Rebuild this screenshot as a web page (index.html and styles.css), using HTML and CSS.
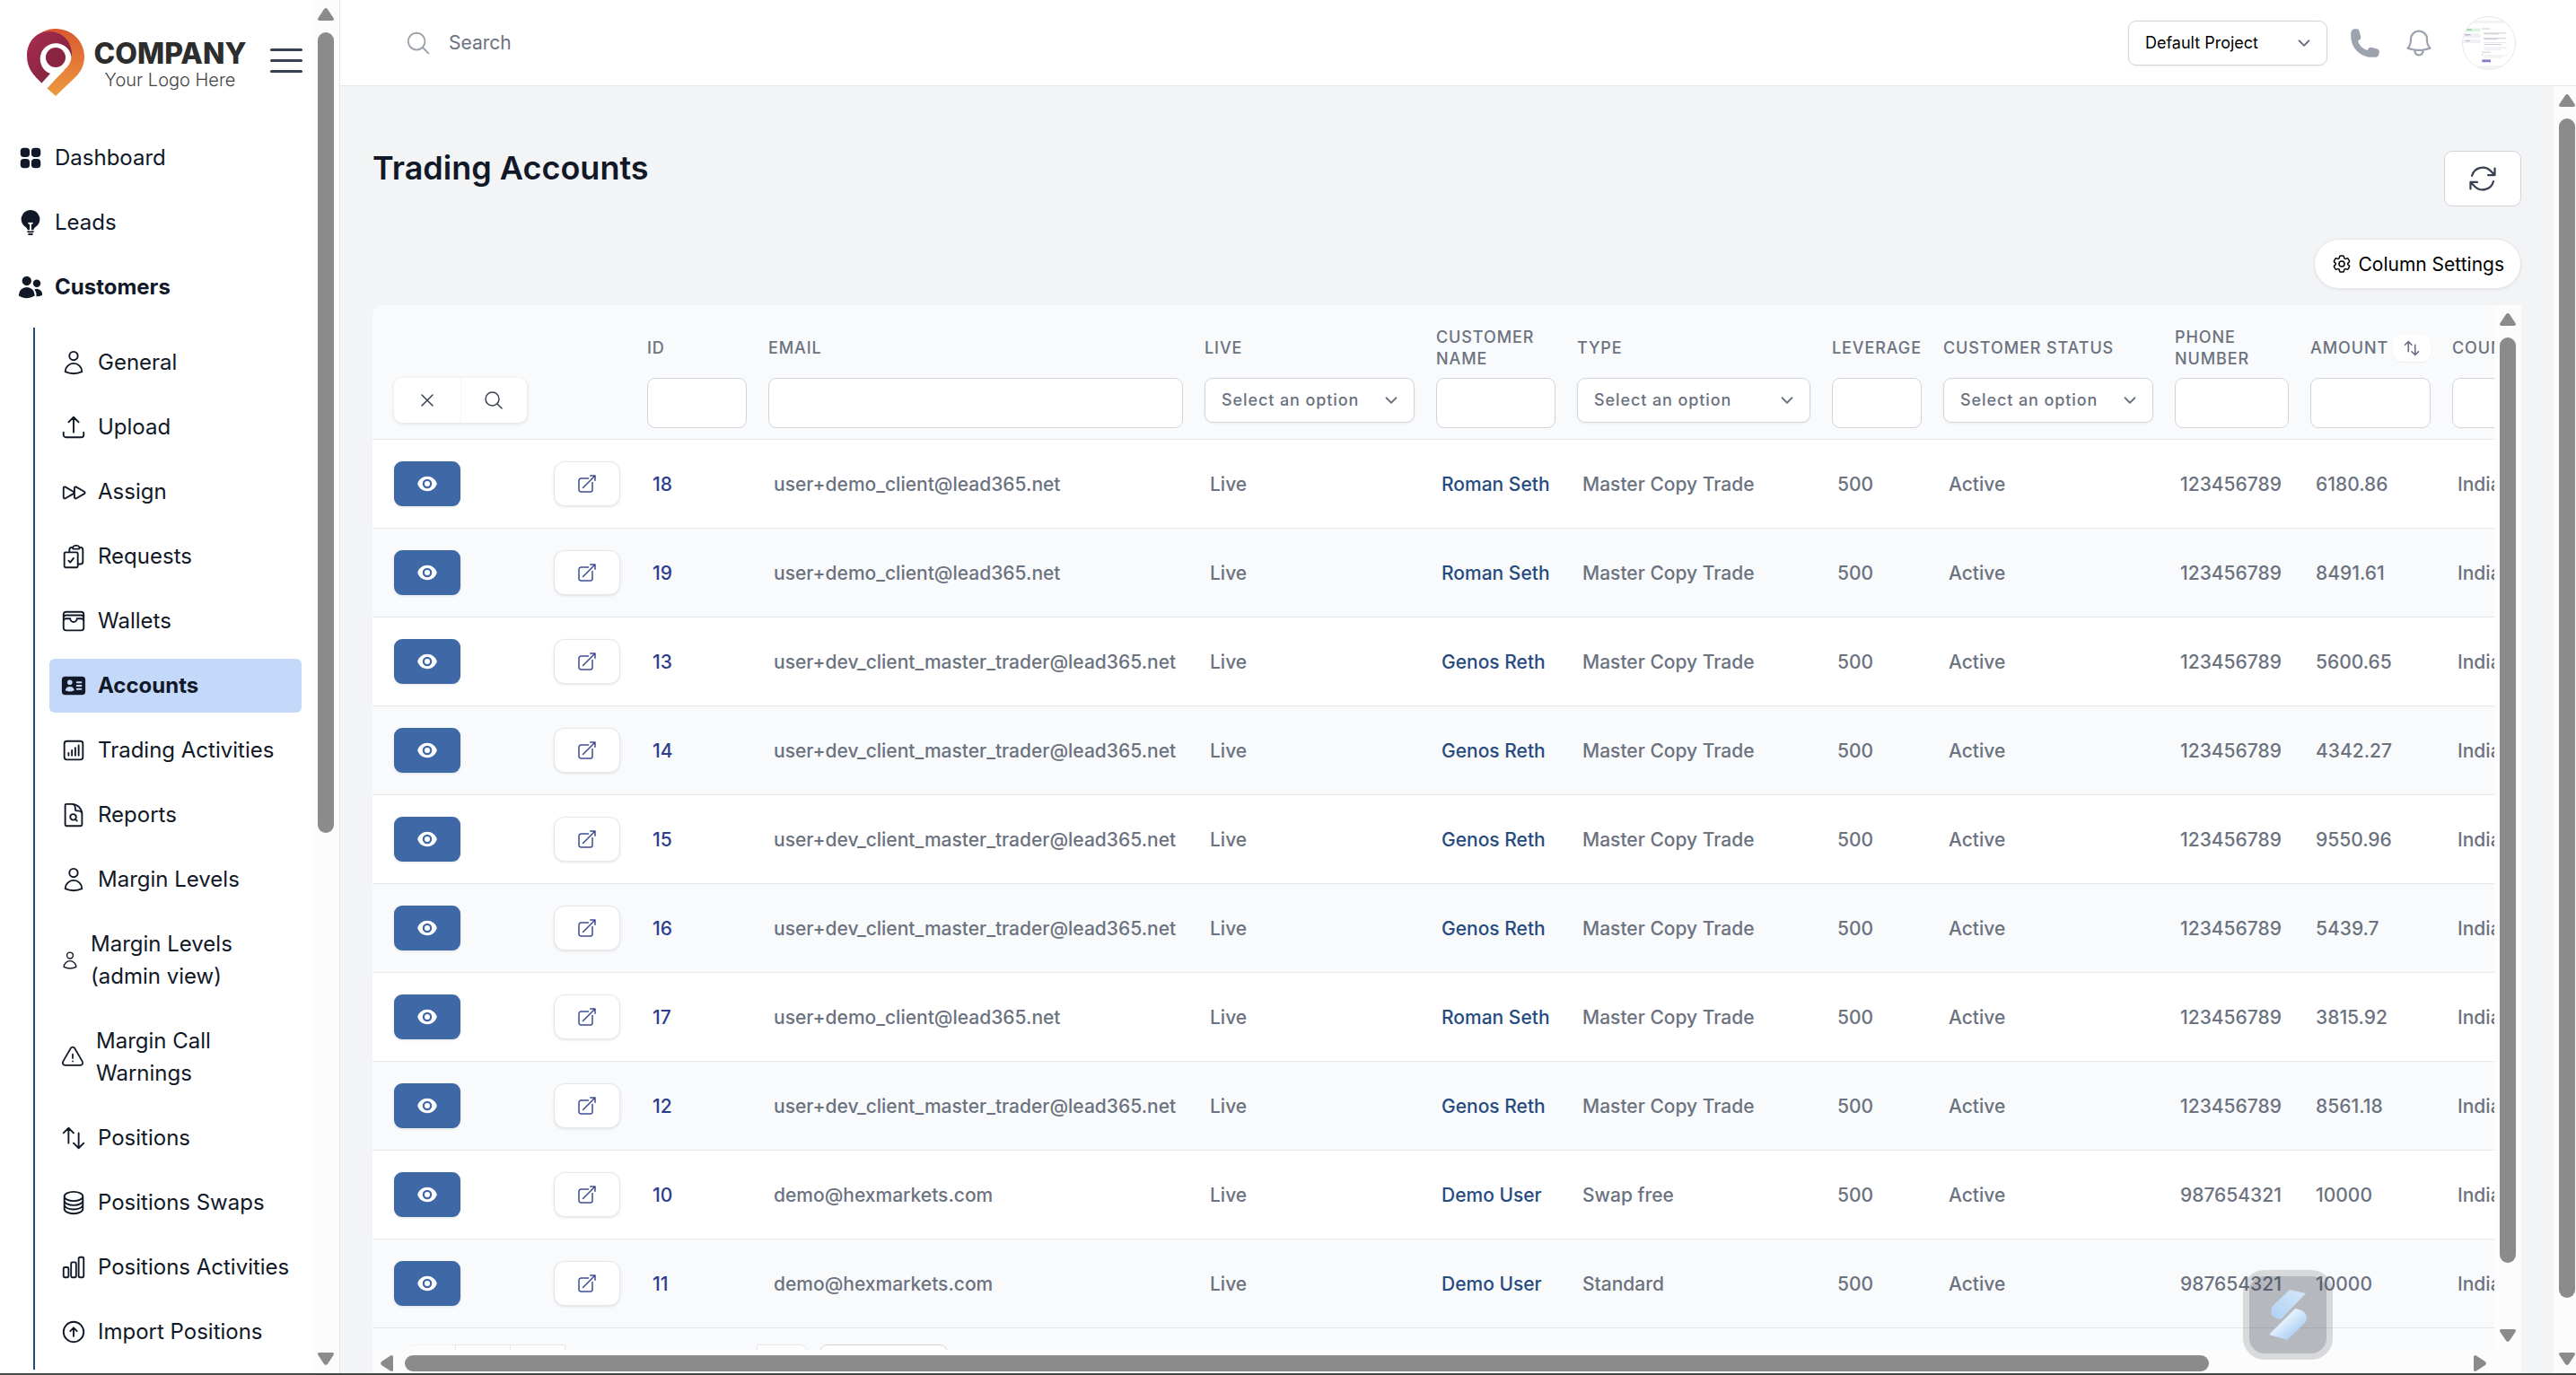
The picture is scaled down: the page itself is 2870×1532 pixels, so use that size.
FILE: index.html
```html
<!DOCTYPE html>
<html lang="en">
<head>
    <meta charset="UTF-8">
    <meta name="viewport" content="width=device-width, initial-scale=1.0">
    <title>Trading Accounts</title>
    <link rel="stylesheet" href="styles.css">
</head>
<body>
<!-- Icon sprite -->
<svg class="sprite" aria-hidden="true">
    <symbol id="i-grid" viewBox="0 0 24 24"><g fill="currentColor" stroke="none"><rect x="3" y="3" width="8.25" height="8.25" rx="3"/><rect x="12.75" y="3" width="8.25" height="8.25" rx="3"/><rect x="3" y="12.75" width="8.25" height="8.25" rx="3"/><rect x="12.75" y="12.75" width="8.25" height="8.25" rx="3"/></g></symbol>
    <symbol id="i-bulb" viewBox="0 0 24 24"><g fill="currentColor" stroke="none"><path d="M12 .75a8.25 8.25 0 0 0-4.135 15.39c.686.398 1.115 1.008 1.134 1.623a.75.75 0 0 0 .577.706c.352.083.71.148 1.074.195.323.041.6-.218.6-.544v-4.661a6.714 6.714 0 0 1-.937-.171.75.75 0 1 1 .374-1.453 5.261 5.261 0 0 0 2.626 0 .75.75 0 1 1 .374 1.452 6.712 6.712 0 0 1-.937.172v4.66c0 .327.277.586.6.545.364-.047.722-.112 1.074-.195a.75.75 0 0 0 .577-.706c.02-.615.448-1.225 1.134-1.623A8.25 8.25 0 0 0 12 .75Z"/><path d="M9.013 19.9a.75.75 0 0 1 .877-.597 11.319 11.319 0 0 0 4.22 0 .75.75 0 1 1 .28 1.473 12.819 12.819 0 0 1-4.78 0 .75.75 0 0 1-.597-.876ZM9.754 22.344a.75.75 0 0 1 .824-.668 13.682 13.682 0 0 0 2.844 0 .75.75 0 1 1 .156 1.492 15.156 15.156 0 0 1-3.156 0 .75.75 0 0 1-.668-.824Z"/></g></symbol>
    <symbol id="i-users" viewBox="0 0 24 24"><path fill="currentColor" stroke="none" d="M4.5 6.375a4.125 4.125 0 1 1 8.25 0 4.125 4.125 0 0 1-8.25 0ZM14.25 8.625a3.375 3.375 0 1 1 6.75 0 3.375 3.375 0 0 1-6.75 0ZM1.5 19.125a7.125 7.125 0 0 1 14.25 0v.003l-.001.119a.75.75 0 0 1-.363.63 13.067 13.067 0 0 1-6.761 1.873c-2.472 0-4.786-.684-6.76-1.873a.75.75 0 0 1-.364-.63l-.001-.122ZM17.25 19.128l-.001.144a2.25 2.25 0 0 1-.233.96 10.088 10.088 0 0 0 5.06-1.01.75.75 0 0 0 .42-.643 4.875 4.875 0 0 0-6.957-4.611 8.586 8.586 0 0 1 1.71 5.157v.003Z"/></symbol>
    <symbol id="i-user" viewBox="0 0 24 24"><path d="M15.75 6a3.75 3.75 0 1 1-7.5 0 3.75 3.75 0 0 1 7.5 0ZM4.501 20.118a7.5 7.5 0 0 1 14.998 0A17.933 17.933 0 0 1 12 21.75c-2.676 0-5.216-.584-7.499-1.632Z"/></symbol>
    <symbol id="i-upload" viewBox="0 0 24 24"><path d="M3 16.5v2.25A2.25 2.25 0 0 0 5.25 21h13.5A2.25 2.25 0 0 0 21 18.75V16.5m-13.5-9L12 3m0 0 4.5 4.5M12 3v13.5"/></symbol>
    <symbol id="i-forward" viewBox="0 0 24 24"><path d="M3 8.689c0-.864.933-1.406 1.683-.977l7.108 4.061a1.125 1.125 0 0 1 0 1.954l-7.108 4.061A1.125 1.125 0 0 1 3 16.811V8.69ZM12.75 8.689c0-.864.933-1.406 1.683-.977l7.108 4.061a1.125 1.125 0 0 1 0 1.954l-7.108 4.061a1.125 1.125 0 0 1-1.683-.977V8.69Z"/></symbol>
    <symbol id="i-clipboard" viewBox="0 0 24 24"><path d="M11.35 3.836c-.065.21-.1.433-.1.664 0 .414.336.75.75.75h4.5a.75.75 0 0 0 .75-.75 2.25 2.25 0 0 0-.1-.664m-5.8 0A2.251 2.251 0 0 1 13.5 2.25H15c1.012 0 1.867.668 2.15 1.586m-5.8 0c-.376.023-.75.05-1.124.08C9.095 4.01 8.25 4.973 8.25 6.108V8.25m8.9-4.414c.376.023.75.05 1.124.08 1.131.094 1.976 1.057 1.976 2.192V16.5A2.25 2.25 0 0 1 18 18.75h-2.25m-7.5-10.5H4.875c-.621 0-1.125.504-1.125 1.125v11.25c0 .621.504 1.125 1.125 1.125h9.75c.621 0 1.125-.504 1.125-1.125V18.75m-7.5-10.5h6.375c.621 0 1.125.504 1.125 1.125v9.375m-8.25-3 1.5 1.5 3-3.75"/></symbol>
    <symbol id="i-wallet" viewBox="0 0 24 24"><path d="M21 12a2.25 2.25 0 0 0-2.25-2.25H15a3 3 0 1 1-6 0H5.25A2.25 2.25 0 0 0 3 12m18 0v6a2.25 2.25 0 0 1-2.25 2.25H5.25A2.25 2.25 0 0 1 3 18v-6m18 0V9M3 12V9m18 0a2.25 2.25 0 0 0-2.25-2.25H5.25A2.25 2.25 0 0 0 3 9m18 0V6a2.25 2.25 0 0 0-2.25-2.25H5.25A2.25 2.25 0 0 0 3 6v3"/></symbol>
    <symbol id="i-card" viewBox="0 0 24 24"><path fill="currentColor" stroke="none" fill-rule="evenodd" d="M4.5 3.75a3 3 0 0 0-3 3v10.5a3 3 0 0 0 3 3h15a3 3 0 0 0 3-3V6.75a3 3 0 0 0-3-3h-15Zm4.125 3a2.25 2.25 0 1 0 0 4.5 2.25 2.25 0 0 0 0-4.5Zm-3.873 8.703a4.126 4.126 0 0 1 7.746 0 .75.75 0 0 1-.351.92 7.47 7.47 0 0 1-3.522.877 7.47 7.47 0 0 1-3.522-.877.75.75 0 0 1-.351-.92ZM15 8.25a.75.75 0 0 0 0 1.5h3.75a.75.75 0 0 0 0-1.5H15ZM14.25 12a.75.75 0 0 1 .75-.75h3.75a.75.75 0 0 1 0 1.5H15a.75.75 0 0 1-.75-.75Zm.75 2.25a.75.75 0 0 0 0 1.5h3.75a.75.75 0 0 0 0-1.5H15Z"/></symbol>
    <symbol id="i-chart-box" viewBox="0 0 24 24"><path d="M7.5 14.25v2.25m3-4.5v4.5m3-6.75v6.75m3-9v9M6 20.25h12A2.25 2.25 0 0 0 20.25 18V6A2.25 2.25 0 0 0 18 3.75H6A2.25 2.25 0 0 0 3.75 6v12A2.25 2.25 0 0 0 6 20.25Z"/></symbol>
    <symbol id="i-report" viewBox="0 0 24 24"><path d="M19.5 14.25v-2.625a3.375 3.375 0 0 0-3.375-3.375h-1.5A1.125 1.125 0 0 1 13.5 7.125v-1.5a3.375 3.375 0 0 0-3.375-3.375H8.25m5.231 13.481L15 17.25m-4.5-15H5.625c-.621 0-1.125.504-1.125 1.125v17.25c0 .621.504 1.125 1.125 1.125h12.75c.621 0 1.125-.504 1.125-1.125V11.25a9 9 0 0 0-9-9Zm3.75 11.625a2.625 2.625 0 1 1-5.25 0 2.625 2.625 0 0 1 5.25 0Z"/></symbol>
    <symbol id="i-warning" viewBox="0 0 24 24"><path d="M12 9v3.75m-9.303 3.376c-.866 1.5.217 3.374 1.948 3.374h14.71c1.73 0 2.813-1.874 1.948-3.374L13.949 3.378c-.866-1.5-3.032-1.5-3.898 0L2.697 16.126ZM12 15.75h.007v.008H12v-.008Z"/></symbol>
    <symbol id="i-updown" viewBox="0 0 24 24"><path d="M3 7.5 7.5 3m0 0L12 7.5M7.5 3v13.5m13.5 0L16.5 21m0 0L12 16.5m4.5 4.5V7.5"/></symbol>
    <symbol id="i-stack" viewBox="0 0 24 24"><path d="M20.25 6.375c0 2.278-3.694 4.125-8.25 4.125S3.75 8.653 3.75 6.375m16.5 0c0-2.278-3.694-4.125-8.25-4.125S3.75 4.097 3.75 6.375m16.5 0v11.25c0 2.278-3.694 4.125-8.25 4.125s-8.25-1.847-8.25-4.125V6.375m16.5 0v3.75m-16.5-3.75v3.75m16.5 0v3.75C20.25 16.153 16.556 18 12 18s-8.25-1.847-8.25-4.125v-3.75m16.5 0c0 2.278-3.694 4.125-8.25 4.125s-8.25-1.847-8.25-4.125"/></symbol>
    <symbol id="i-bars" viewBox="0 0 24 24"><path d="M3 13.125C3 12.504 3.504 12 4.125 12h2.25c.621 0 1.125.504 1.125 1.125v6.75C7.5 20.496 6.996 21 6.375 21h-2.25A1.125 1.125 0 0 1 3 19.875v-6.75ZM9.75 8.625c0-.621.504-1.125 1.125-1.125h2.25c.621 0 1.125.504 1.125 1.125v11.25c0 .621-.504 1.125-1.125 1.125h-2.25a1.125 1.125 0 0 1-1.125-1.125V8.625ZM16.5 4.125c0-.621.504-1.125 1.125-1.125h2.25C20.496 3 21 3.504 21 4.125v15.75c0 .621-.504 1.125-1.125 1.125h-2.25a1.125 1.125 0 0 1-1.125-1.125V4.125Z"/></symbol>
    <symbol id="i-up-circle" viewBox="0 0 24 24"><path d="m15 11.25-3-3m0 0-3 3m3-3v7.5M21 12a9 9 0 1 1-18 0 9 9 0 0 1 18 0Z"/></symbol>
    <symbol id="i-search" viewBox="0 0 24 24"><path d="m21 21-5.197-5.197m0 0A7.5 7.5 0 1 0 5.196 5.196a7.5 7.5 0 0 0 10.607 10.607Z"/></symbol>
    <symbol id="i-close" viewBox="0 0 24 24"><path d="M6 18 18 6M6 6l12 12"/></symbol>
    <symbol id="i-chevron" viewBox="0 0 24 24"><path d="m6 9 6 6 6-6"/></symbol>
    <symbol id="i-phone" viewBox="0 0 24 24"><path fill="currentColor" stroke="none" d="M1.5 4.5a3 3 0 0 1 3-3h1.372c.86 0 1.61.586 1.819 1.42l1.105 4.423a1.875 1.875 0 0 1-.694 1.955l-1.293.97c-.135.101-.164.249-.126.352a11.285 11.285 0 0 0 6.697 6.697c.103.038.25.009.352-.126l.97-1.293a1.875 1.875 0 0 1 1.955-.694l4.423 1.105c.834.209 1.42.959 1.42 1.82V19.5a3 3 0 0 1-3 3h-2.25C8.552 22.5 1.5 15.448 1.5 6.75V4.5Z"/></symbol>
    <symbol id="i-bell" viewBox="0 0 24 24"><path d="M14.857 17.082a23.848 23.848 0 0 0 5.454-1.31A8.967 8.967 0 0 1 18 9.75V9A6 6 0 0 0 6 9v.75a8.967 8.967 0 0 1-2.312 6.022c1.733.64 3.56 1.085 5.455 1.31m5.714 0a24.255 24.255 0 0 1-5.714 0m5.714 0a3 3 0 1 1-5.714 0"/></symbol>
    <symbol id="i-refresh" viewBox="0 0 24 24"><path d="M16.023 9.348h4.992v-.001M2.985 19.644v-4.992m0 0h4.992m-4.993 0 3.181 3.183a8.25 8.25 0 0 0 13.803-3.7M4.031 9.865a8.25 8.25 0 0 1 13.803-3.7l3.181 3.182m0-4.991v4.99"/></symbol>
    <symbol id="i-cog" viewBox="0 0 24 24"><path d="M9.594 3.94c.09-.542.56-.94 1.11-.94h2.593c.55 0 1.02.398 1.11.94l.213 1.281c.063.374.313.686.645.87.074.04.147.083.22.127.325.196.72.257 1.075.124l1.217-.456a1.125 1.125 0 0 1 1.37.49l1.296 2.247a1.125 1.125 0 0 1-.26 1.431l-1.003.827c-.293.241-.438.613-.43.992a7.723 7.723 0 0 1 0 .255c-.008.378.137.75.43.991l1.004.827c.424.35.534.955.26 1.43l-1.298 2.247a1.125 1.125 0 0 1-1.369.491l-1.217-.456c-.355-.133-.75-.072-1.076.124a6.47 6.47 0 0 1-.22.128c-.331.183-.581.495-.644.869l-.213 1.281c-.09.543-.56.94-1.11.94h-2.594c-.55 0-1.019-.398-1.11-.94l-.213-1.281c-.062-.374-.312-.686-.644-.87a6.52 6.52 0 0 1-.22-.127c-.325-.196-.72-.257-1.076-.124l-1.217.456a1.125 1.125 0 0 1-1.369-.49l-1.297-2.247a1.125 1.125 0 0 1 .26-1.431l1.004-.827c.292-.24.437-.613.43-.991a6.932 6.932 0 0 1 0-.255c.007-.38-.138-.751-.43-.992l-1.004-.827a1.125 1.125 0 0 1-.26-1.43l1.297-2.247a1.125 1.125 0 0 1 1.37-.491l1.216.456c.356.133.751.072 1.076-.124.072-.044.146-.086.22-.128.332-.183.582-.495.644-.869l.214-1.28ZM15 12a3 3 0 1 1-6 0 3 3 0 0 1 6 0Z"/></symbol>
    <symbol id="i-eye" viewBox="0 0 24 24"><g fill="currentColor" stroke="none"><path d="M12 15a3 3 0 1 0 0-6 3 3 0 0 0 0 6Z"/><path fill-rule="evenodd" d="M1.323 11.447C2.811 6.976 7.028 3.75 12.001 3.75c4.97 0 9.185 3.223 10.675 7.69.12.362.12.752 0 1.113-1.487 4.471-5.705 7.697-10.677 7.697-4.97 0-9.186-3.223-10.675-7.69a1.762 1.762 0 0 1 0-1.113ZM17.25 12a5.25 5.25 0 1 1-10.5 0 5.25 5.25 0 0 1 10.5 0Z"/></g></symbol>
    <symbol id="i-external" viewBox="0 0 24 24"><path d="M13.5 6H5.25A2.25 2.25 0 0 0 3 8.25v10.5A2.25 2.25 0 0 0 5.25 21h10.5A2.25 2.25 0 0 0 18 18.75V10.5m-10.5 6L21 3m0 0h-5.25M21 3v5.25"/></symbol>
    <symbol id="i-arrow" viewBox="0 0 18 14"><path fill="currentColor" stroke="none" d="M7 1.2Q9-1 11 1.2L17.5 11Q18.8 14 16 14H2Q-.8 14 .5 11Z"/></symbol>
</svg>

<div class="app">
    <aside class="sidebar">
        <div class="sidebar-content">
            <div class="brand">
                <svg class="brand-mark" viewBox="0 0 64 77" aria-hidden="true">
                    <defs>
                        <linearGradient id="orange" x1="0" y1="0" x2="0" y2="1"><stop offset="0" stop-color="#d9582f"/><stop offset="1" stop-color="#ee9a41"/></linearGradient>
                        <linearGradient id="maroon" x1="0" y1="0" x2="1" y2="1"><stop offset="0" stop-color="#a92d50"/><stop offset="1" stop-color="#78203a"/></linearGradient>
                    </defs>
                    <path fill="url(#orange)" d="M8 12C14 5 22 1 32 1c18 0 32 14 32 31 0 10-4 17-10 23L32 76 22 67l20-20Z"/>
                    <path fill="url(#maroon)" d="M17 62C6 52 0 44 0 31 0 15 11 4 25 4c15 0 26 12 25 28L30 50Z"/>
                    <path fill="#fff" d="M49.500 32A17.500 17.500 0 1 0 26 51L16.500 61.500l6 6L41 47q8.500-6 8.500-15Z"/>
                    <circle cx="32" cy="33" r="11" fill="#8a2440"/>
                </svg>
                <div class="brand-text">
                    <span class="brand-name">COMPANY</span>
                    <span class="brand-tagline">Your Logo Here</span>
                </div>
                <button class="menu-toggle" type="button" aria-label="Toggle menu"><span></span><span></span><span></span></button>
            </div>
            <nav class="nav">
                <a class="nav-item" href="#"><svg class="icon"><use href="#i-grid"/></svg>Dashboard</a>
                <a class="nav-item" href="#"><svg class="icon"><use href="#i-bulb"/></svg>Leads</a>
                <a class="nav-item nav-open" href="#"><svg class="icon"><use href="#i-users"/></svg>Customers</a>
                <div class="subnav">
                    <a class="nav-item" href="#"><svg class="icon"><use href="#i-user"/></svg>General</a>
                    <a class="nav-item" href="#"><svg class="icon"><use href="#i-upload"/></svg>Upload</a>
                    <a class="nav-item" href="#"><svg class="icon"><use href="#i-forward"/></svg>Assign</a>
                    <a class="nav-item" href="#"><svg class="icon"><use href="#i-clipboard"/></svg>Requests</a>
                    <a class="nav-item" href="#"><svg class="icon"><use href="#i-wallet"/></svg>Wallets</a>
                    <a class="nav-item nav-active" href="#"><svg class="icon"><use href="#i-card"/></svg>Accounts</a>
                    <a class="nav-item" href="#"><svg class="icon"><use href="#i-chart-box"/></svg>Trading Activities</a>
                    <a class="nav-item" href="#"><svg class="icon"><use href="#i-report"/></svg>Reports</a>
                    <a class="nav-item" href="#"><svg class="icon"><use href="#i-user"/></svg>Margin Levels</a>
                    <a class="nav-item" href="#"><svg class="icon icon-sm"><use href="#i-user"/></svg>Margin Levels<br>(admin view)</a>
                    <a class="nav-item" href="#"><svg class="icon icon-md"><use href="#i-warning"/></svg>Margin Call<br>Warnings</a>
                    <a class="nav-item" href="#"><svg class="icon"><use href="#i-updown"/></svg>Positions</a>
                    <a class="nav-item" href="#"><svg class="icon"><use href="#i-stack"/></svg>Positions Swaps</a>
                    <a class="nav-item" href="#"><svg class="icon"><use href="#i-bars"/></svg>Positions Activities</a>
                    <a class="nav-item" href="#"><svg class="icon"><use href="#i-up-circle"/></svg>Import Positions</a>
                </div>
            </nav>
        </div>
        <div class="scrollbar scrollbar-sidebar" aria-hidden="true">
            <svg class="arrow"><use href="#i-arrow"/></svg>
            <div class="track"><div class="thumb"></div></div>
            <svg class="arrow arrow-down"><use href="#i-arrow"/></svg>
        </div>
    </aside>

    <div class="page">
        <header class="topbar">
            <label class="search">
                <svg class="icon"><use href="#i-search"/></svg>
                <input type="search" placeholder="Search" aria-label="Search">
            </label>
            <div class="select project-select">
                <select aria-label="Project"><option>Default Project</option></select>
                <svg class="chevron"><use href="#i-chevron"/></svg>
            </div>
            <button class="icon-button" type="button" aria-label="Calls"><svg class="icon icon-lg"><use href="#i-phone"/></svg></button>
            <button class="icon-button" type="button" aria-label="Notifications"><svg class="icon icon-lg"><use href="#i-bell"/></svg></button>
            <button class="avatar" type="button" aria-label="Profile">
                <svg viewBox="0 0 60 60">
                    <rect x="0" y="4" width="60" height="3" fill="#f1f2f4"/>
                    <rect x="0" y="13" width="20" height="4" fill="#dcf5e0"/>
                    <rect x="4" y="14" width="6" height="1" fill="#7fae87"/>
                    <rect x="0" y="19" width="20" height="5" fill="#eef0f4"/>
                    <rect x="2" y="20" width="7" height="1" fill="#9aa0ab"/>
                    <rect x="0" y="26" width="20" height="4" fill="#eef0f4"/>
                    <rect x="3" y="27" width="5" height="1" fill="#b4b9c2"/>
                    <g fill="#c9ccd3"><rect x="22" y="13" width="9" height="1"/><rect x="24" y="18" width="26" height="1"/><rect x="24" y="19" width="18" height="1"/><rect x="24" y="24" width="26" height="1"/><rect x="24" y="25" width="16" height="1"/><rect x="24" y="31" width="20" height="1"/><rect x="22" y="40" width="10" height="1"/></g>
                    <g fill="#e6e8ec"><rect x="24" y="29" width="26" height="1"/><rect x="24" y="35" width="27" height="1"/><rect x="24" y="37" width="20" height="1"/><rect x="24" y="44" width="27" height="1"/><rect x="24" y="46" width="21" height="1"/></g>
                    <rect x="22" y="43" width="1" height="1" fill="#e28a8a"/>
                    <rect x="22" y="49" width="10" height="3" fill="#857ccf"/>
                    <rect x="0" y="56" width="60" height="4" fill="#f1f2f4"/>
                </svg>
            </button>
        </header>

        <div class="body">
            <main class="main">
                <div class="title-row">
                    <h1>Trading Accounts</h1>
                    <button class="refresh" type="button" aria-label="Refresh"><svg class="icon icon-lg"><use href="#i-refresh"/></svg></button>
                </div>
                <button class="column-settings" type="button"><svg class="icon icon-xs"><use href="#i-cog"/></svg>Column Settings</button>

                <section class="panel">
                    <div class="table-view">
                        <table class="accounts">
                            <colgroup>
                                <col class="c-actions"><col class="c-open"><col class="c-id"><col class="c-email"><col class="c-live"><col class="c-name"><col class="c-type"><col class="c-leverage"><col class="c-status"><col class="c-phone"><col class="c-amount"><col class="c-country">
                            </colgroup>
                            <thead>
                            <tr>
                                <th>
                                    <div class="th-label"></div>
                                    <div class="filter-buttons">
                                        <button type="button" aria-label="Clear filters"><svg class="icon icon-xs"><use href="#i-close"/></svg></button>
                                        <button type="button" aria-label="Apply filters"><svg class="icon icon-xs"><use href="#i-search"/></svg></button>
                                    </div>
                                </th>
                                <th></th>
                                <th><div class="th-label"><label for="f-id">ID</label></div><input class="filter" id="f-id" type="text"></th>
                                <th><div class="th-label"><label for="f-email">Email</label></div><input class="filter" id="f-email" type="text"></th>
                                <th>
                                    <div class="th-label"><label for="f-live">Live</label></div>
                                    <div class="select"><select id="f-live"><option>Select an option</option></select><svg class="chevron"><use href="#i-chevron"/></svg></div>
                                </th>
                                <th><div class="th-label"><label for="f-name">Customer name</label></div><input class="filter" id="f-name" type="text"></th>
                                <th>
                                    <div class="th-label"><label for="f-type">Type</label></div>
                                    <div class="select"><select id="f-type"><option>Select an option</option></select><svg class="chevron"><use href="#i-chevron"/></svg></div>
                                </th>
                                <th><div class="th-label"><label for="f-leverage">Leverage</label></div><input class="filter" id="f-leverage" type="text"></th>
                                <th>
                                    <div class="th-label"><label for="f-status">Customer status</label></div>
                                    <div class="select"><select id="f-status"><option>Select an option</option></select><svg class="chevron"><use href="#i-chevron"/></svg></div>
                                </th>
                                <th><div class="th-label"><label for="f-phone">Phone number</label></div><input class="filter" id="f-phone" type="text"></th>
                                <th>
                                    <div class="th-label"><label for="f-amount">Amount</label><button class="sort" type="button" aria-label="Sort by amount"><svg><use href="#i-updown"/></svg></button></div>
                                    <input class="filter" id="f-amount" type="text">
                                </th>
                                <th><div class="th-label"><label for="f-country">Country</label></div><input class="filter" id="f-country" type="text"></th>
                            </tr>
                            </thead>
                            <tbody>
                            <tr>
                                <td><button class="view" type="button" aria-label="View"><svg class="icon icon-xs"><use href="#i-eye"/></svg></button></td>
                                <td><button class="open" type="button" aria-label="Open"><svg class="icon icon-xs"><use href="#i-external"/></svg></button></td>
                                <td class="id">18</td><td>user+demo_client@lead365.net</td><td>Live</td><td><a href="#">Roman Seth</a></td><td>Master Copy Trade</td><td>500</td><td>Active</td><td>123456789</td><td>6180.86</td><td>India</td>
                            </tr>
                            <tr>
                                <td><button class="view" type="button" aria-label="View"><svg class="icon icon-xs"><use href="#i-eye"/></svg></button></td>
                                <td><button class="open" type="button" aria-label="Open"><svg class="icon icon-xs"><use href="#i-external"/></svg></button></td>
                                <td class="id">19</td><td>user+demo_client@lead365.net</td><td>Live</td><td><a href="#">Roman Seth</a></td><td>Master Copy Trade</td><td>500</td><td>Active</td><td>123456789</td><td>8491.61</td><td>India</td>
                            </tr>
                            <tr>
                                <td><button class="view" type="button" aria-label="View"><svg class="icon icon-xs"><use href="#i-eye"/></svg></button></td>
                                <td><button class="open" type="button" aria-label="Open"><svg class="icon icon-xs"><use href="#i-external"/></svg></button></td>
                                <td class="id">13</td><td>user+dev_client_master_trader@lead365.net</td><td>Live</td><td><a href="#">Genos Reth</a></td><td>Master Copy Trade</td><td>500</td><td>Active</td><td>123456789</td><td>5600.65</td><td>India</td>
                            </tr>
                            <tr>
                                <td><button class="view" type="button" aria-label="View"><svg class="icon icon-xs"><use href="#i-eye"/></svg></button></td>
                                <td><button class="open" type="button" aria-label="Open"><svg class="icon icon-xs"><use href="#i-external"/></svg></button></td>
                                <td class="id">14</td><td>user+dev_client_master_trader@lead365.net</td><td>Live</td><td><a href="#">Genos Reth</a></td><td>Master Copy Trade</td><td>500</td><td>Active</td><td>123456789</td><td>4342.27</td><td>India</td>
                            </tr>
                            <tr>
                                <td><button class="view" type="button" aria-label="View"><svg class="icon icon-xs"><use href="#i-eye"/></svg></button></td>
                                <td><button class="open" type="button" aria-label="Open"><svg class="icon icon-xs"><use href="#i-external"/></svg></button></td>
                                <td class="id">15</td><td>user+dev_client_master_trader@lead365.net</td><td>Live</td><td><a href="#">Genos Reth</a></td><td>Master Copy Trade</td><td>500</td><td>Active</td><td>123456789</td><td>9550.96</td><td>India</td>
                            </tr>
                            <tr>
                                <td><button class="view" type="button" aria-label="View"><svg class="icon icon-xs"><use href="#i-eye"/></svg></button></td>
                                <td><button class="open" type="button" aria-label="Open"><svg class="icon icon-xs"><use href="#i-external"/></svg></button></td>
                                <td class="id">16</td><td>user+dev_client_master_trader@lead365.net</td><td>Live</td><td><a href="#">Genos Reth</a></td><td>Master Copy Trade</td><td>500</td><td>Active</td><td>123456789</td><td>5439.7</td><td>India</td>
                            </tr>
                            <tr>
                                <td><button class="view" type="button" aria-label="View"><svg class="icon icon-xs"><use href="#i-eye"/></svg></button></td>
                                <td><button class="open" type="button" aria-label="Open"><svg class="icon icon-xs"><use href="#i-external"/></svg></button></td>
                                <td class="id">17</td><td>user+demo_client@lead365.net</td><td>Live</td><td><a href="#">Roman Seth</a></td><td>Master Copy Trade</td><td>500</td><td>Active</td><td>123456789</td><td>3815.92</td><td>India</td>
                            </tr>
                            <tr>
                                <td><button class="view" type="button" aria-label="View"><svg class="icon icon-xs"><use href="#i-eye"/></svg></button></td>
                                <td><button class="open" type="button" aria-label="Open"><svg class="icon icon-xs"><use href="#i-external"/></svg></button></td>
                                <td class="id">12</td><td>user+dev_client_master_trader@lead365.net</td><td>Live</td><td><a href="#">Genos Reth</a></td><td>Master Copy Trade</td><td>500</td><td>Active</td><td>123456789</td><td>8561.18</td><td>India</td>
                            </tr>
                            <tr>
                                <td><button class="view" type="button" aria-label="View"><svg class="icon icon-xs"><use href="#i-eye"/></svg></button></td>
                                <td><button class="open" type="button" aria-label="Open"><svg class="icon icon-xs"><use href="#i-external"/></svg></button></td>
                                <td class="id">10</td><td>demo@hexmarkets.com</td><td>Live</td><td><a href="#">Demo User</a></td><td>Swap free</td><td>500</td><td>Active</td><td>987654321</td><td>10000</td><td>India</td>
                            </tr>
                            <tr>
                                <td><button class="view" type="button" aria-label="View"><svg class="icon icon-xs"><use href="#i-eye"/></svg></button></td>
                                <td><button class="open" type="button" aria-label="Open"><svg class="icon icon-xs"><use href="#i-external"/></svg></button></td>
                                <td class="id">11</td><td>demo@hexmarkets.com</td><td>Live</td><td><a href="#">Demo User</a></td><td>Standard</td><td>500</td><td>Active</td><td>987654321</td><td>10000</td><td>India</td>
                            </tr>
                            </tbody>
                        </table>
                        <div class="pager">
                            <div class="pager-buttons">
                                <button class="page-button" type="button" aria-label="First page" disabled></button>
                                <button class="page-button" type="button" aria-label="Previous page"></button>
                                <button class="page-button" type="button" aria-label="Next page"></button>
                            </div>
                            <button class="page-button page-last" type="button" aria-label="Last page"></button>
                            <select class="page-size" aria-label="Rows per page"></select>
                        </div>
                    </div>
                    <div class="scrollbar scrollbar-table" aria-hidden="true">
                        <svg class="arrow"><use href="#i-arrow"/></svg>
                        <div class="track"><div class="thumb"></div></div>
                        <svg class="arrow arrow-down"><use href="#i-arrow"/></svg>
                    </div>
                    <div class="scrollbar scrollbar-x" aria-hidden="true">
                        <svg class="arrow arrow-left" viewBox="0 0 14 18"><path d="M1.200 11Q-1 9 1.200 7L11 .5Q14-.8 14 2v14q0 2.800-3 1.500Z"/></svg>
                        <div class="track"><div class="thumb"></div></div>
                        <svg class="arrow arrow-right" viewBox="0 0 14 18"><path d="M12.800 7Q15 9 12.800 11L3 17.500Q0 18.800 0 16V2Q0-.8 3 .5Z"/></svg>
                    </div>
                </section>
            </main>
            <div class="scrollbar scrollbar-page" aria-hidden="true">
                <svg class="arrow"><use href="#i-arrow"/></svg>
                <div class="track"><div class="thumb"></div></div>
                <svg class="arrow arrow-down"><use href="#i-arrow"/></svg>
            </div>
        </div>
    </div>

    <button class="widget" type="button" aria-label="Open assistant">
        <svg viewBox="0 0 42 56">
            <defs>
                <linearGradient id="blue-a" x1="1" y1="0" x2="0" y2="1"><stop offset="0" stop-color="#d6e8fa"/><stop offset="1" stop-color="#b0d0f4"/></linearGradient>
                <linearGradient id="blue-b" x1="0" y1="0" x2="1" y2="1"><stop offset="0" stop-color="#c3dcf6"/><stop offset=".4" stop-color="#e2f0fd"/><stop offset=".7" stop-color="#b7d4f5"/><stop offset="1" stop-color="#acccf3"/></linearGradient>
            </defs>
            <path fill="url(#blue-a)" d="M23 0 41 4 13 33Q2 32 2 24q0-4 3-7Z"/>
            <path fill="url(#blue-b)" d="M29 21q13 2 13 11 0 3-3 6L20 56 0 50Z"/>
        </svg>
    </button>
</div>
</body>
</html>
```
FILE: styles.css
```css
* {
    box-sizing: border-box;
}

body {
    margin: 0;
    font-family: Inter, "Liberation Sans", sans-serif;
    font-size: 21px;
    color: #111827;
    background-color: #f3f4f6;
}

button,
input,
select {
    font: inherit;
    color: inherit;
    letter-spacing: inherit;
}

button {
    padding: 0;
    border: none;
    cursor: pointer;
}

a {
    text-decoration: none;
    color: inherit;
}

.sprite {
    display: none;
}

svg {
    display: block;
    flex-shrink: 0;
    fill: none;
    stroke: currentColor;
    stroke-width: 1.5;
    stroke-linecap: round;
    stroke-linejoin: round;
}

.icon {
    width: 30px;
    height: 30px;
}

.icon-xs {
    width: 24px;
    height: 24px;
}

.icon-sm {
    width: 22px;
    height: 22px;
}

.icon-md {
    width: 28px;
    height: 28px;
}

.icon-lg {
    width: 36px;
    height: 36px;
}

.app {
    display: flex;
    height: 100vh;
    overflow: hidden;
    border-bottom: 2px solid #444a42;
}

/* Sidebar */
.sidebar {
    display: flex;
    flex-shrink: 0;
    background-color: #fff;
    border-right: 1px solid #e5e7eb;
}

.sidebar-content {
    width: 348px;
    overflow: hidden;
}

.brand {
    display: flex;
    align-items: center;
    height: 146px;
    padding: 0 11px 8px 30px;
    gap: 9px;
}

.brand-mark {
    width: 64px;
    height: 77px;
    stroke: none;
}

.brand-text {
    flex: 1;
    display: flex;
    flex-direction: column;
    align-items: center;
    padding-top: 8px;
    white-space: nowrap;
}

.brand-name {
    font-size: 32px;
    line-height: 32px;
    font-weight: 800;
    color: #2d2d2d;
}

.brand-tagline {
    font-size: 20px;
    line-height: 26px;
    font-weight: 300;
    color: #444;
}

.menu-toggle {
    display: flex;
    flex-direction: column;
    gap: 9px;
    width: 36px;
    margin: 0 0 4px 16px;
    background: none;
}

.menu-toggle span {
    height: 3px;
    border-radius: 2px;
    background-color: #374151;
}

.nav {
    display: flex;
    flex-direction: column;
    gap: 12px;
    padding: 0 12px 0 7px;
}

.nav-item {
    display: flex;
    align-items: center;
    gap: 12px;
    padding: 12px;
    border-radius: 6px;
    font-size: 24px;
    line-height: 36px;
}

.nav-open,
.nav-active {
    font-weight: 700;
}

.nav-active {
    background-color: #c4d9fa;
}

.subnav {
    display: flex;
    flex-direction: column;
    gap: 12px;
    margin: 3px 0 0 30px;
    padding: 9px 0 12px 16px;
    border-left: 2px solid #1e4b77;
}

/* Scrollbars */
.scrollbar {
    display: flex;
    flex-direction: column;
    flex-shrink: 0;
    width: 30px;
    padding: 9px 6px;
    background-color: #fcfcfc;
}

.arrow {
    width: 18px;
    height: 14px;
    color: #8b8b8b;
}

.arrow-down {
    transform: rotate(180deg);
}

.track {
    flex: 1;
    display: flex;
    flex-direction: column;
    margin: 13px 0;
}

.thumb {
    border-radius: 9px;
    background-color: #8b8b8b;
}

.track::after {
    content: "";
}

.scrollbar-sidebar .thumb {
    flex: 612;
}

.scrollbar-sidebar .track::after {
    flex: 388;
}

.scrollbar-page {
    width: 25px;
    padding-right: 1px;
}

.scrollbar-page .thumb {
    flex: 965;
}

.scrollbar-page .track::after {
    flex: 35;
}

.scrollbar-table .thumb {
    flex: 944;
}

.scrollbar-table .track::after {
    flex: 56;
}

.scrollbar-x {
    grid-column: 1 / -1;
    flex-direction: row;
    width: auto;
    height: 26px;
    padding: 6px 39px 2px 9px;
}

.scrollbar-x .track {
    flex-direction: row;
    margin: 0 13px;
}

.scrollbar-x .thumb {
    flex: 877;
}

.scrollbar-x .track::after {
    flex: 123;
}

.arrow-left,
.arrow-right {
    width: 14px;
    height: 18px;
    fill: currentColor;
    stroke: none;
}

/* Top bar */
.page {
    flex: 1;
    min-width: 0;
    display: flex;
    flex-direction: column;
}

.topbar {
    display: flex;
    align-items: center;
    height: 96px;
    padding: 0 67px 0 72px;
    background-color: #fff;
    border-bottom: 1px solid #e5e7eb;
}

.search {
    flex: 1;
    display: flex;
    align-items: center;
    gap: 19px;
    color: #9ca3af;
}

.search input {
    flex: 1;
    border: none;
    padding: 0;
    outline: none;
    background: none;
    color: #111827;
}

.search input::placeholder {
    color: #6b7280;
}

.select {
    position: relative;
    height: 50px;
}

.select select {
    appearance: none;
    width: 100%;
    height: 50px;
    padding: 0 48px 0 18px;
    border: 1px solid #d1d5db;
    border-radius: 9px;
    background-color: #fff;
    box-shadow: 0 1px 3px rgba(0, 0, 0, 0.06);
}

.chevron {
    position: absolute;
    right: 15px;
    top: 14px;
    width: 22px;
    height: 22px;
    color: #6b7280;
    stroke-width: 2;
    pointer-events: none;
}

.project-select {
    width: 222px;
    margin-right: 24px;
    font-size: 18px;
    color: #000;
}

.icon-button {
    margin-right: 24px;
    background: none;
    color: #9ca3af;
}

.avatar {
    width: 60px;
    height: 60px;
    margin-left: 6px;
    border: 1px solid #e5e7eb;
    border-radius: 50%;
    overflow: hidden;
    background-color: #fff;
}

.avatar svg {
    stroke: none;
}

/* Content */
.body {
    flex: 1;
    min-height: 0;
    display: flex;
}

.main {
    flex: 1;
    min-width: 0;
    display: flex;
    flex-direction: column;
    padding: 72px 36px 0;
}

.title-row {
    display: flex;
    justify-content: space-between;
    align-items: flex-start;
    margin-bottom: 36px;
}

h1 {
    margin: 0;
    font-size: 36px;
    line-height: 38px;
    font-weight: 600;
}

.refresh {
    display: flex;
    align-items: center;
    justify-content: center;
    width: 86px;
    height: 62px;
    border: 1px solid #d1d5db;
    border-radius: 9px;
    background-color: #fff;
    color: #374151;
}

.column-settings {
    align-self: flex-end;
    display: flex;
    align-items: center;
    gap: 6px;
    height: 56px;
    margin-bottom: 18px;
    padding: 0 18px;
    border: 1px solid #e5e7eb;
    border-radius: 28px;
    background-color: #fff;
    color: #000;
    box-shadow: 0 1px 3px rgba(0, 0, 0, 0.08);
}

.panel {
    flex: 1;
    min-height: 0;
    display: grid;
    grid-template-columns: minmax(0, 1fr) 30px;
    grid-template-rows: minmax(0, 1fr) auto;
    border-radius: 12px 0 0 0;
    overflow: hidden;
    background-color: #f9fafb;
}

.table-view {
    overflow: hidden;
}

.accounts {
    table-layout: fixed;
    width: 2505px;
    border-collapse: separate;
    border-spacing: 0;
    color: #6b7280;
}

.c-actions { width: 184px; }
.c-open { width: 110px; }
.c-id { width: 135px; }
.c-email { width: 486px; }
.c-live { width: 258px; }
.c-name { width: 157px; }
.c-type { width: 284px; }
.c-leverage { width: 124px; }
.c-status { width: 258px; }
.c-phone { width: 151px; }
.c-amount { width: 158px; }
.c-country { width: 200px; }

.accounts th {
    height: 149px;
    padding: 24px 12px 12px;
    vertical-align: top;
    text-align: left;
    font-size: 18px;
    line-height: 24px;
    font-weight: 500;
    letter-spacing: 0.05em;
}

.th-label {
    display: flex;
    align-items: center;
    justify-content: space-between;
    height: 48px;
    margin-bottom: 9px;
    text-transform: uppercase;
}

.filter {
    display: block;
    width: 100%;
    height: 56px;
    padding: 0 12px;
    border: 1px solid #d1d5db;
    border-radius: 9px;
    background-color: #fff;
}

.filter-buttons {
    display: flex;
    width: 148px;
    margin-left: 12px;
    border-radius: 9px;
    background-color: #fff;
    box-shadow: 0 1px 4px rgba(0, 0, 0, 0.12);
}

.filter-buttons button {
    flex: 1;
    display: flex;
    align-items: center;
    justify-content: center;
    height: 50px;
    background: none;
    color: #374151;
}

.filter-buttons button + button {
    border-left: 1px solid #f3f4f6;
}

.sort {
    display: flex;
    align-items: center;
    justify-content: center;
    width: 42px;
    height: 30px;
    border-radius: 9px;
    background-color: #fff;
    color: #6b7280;
    box-shadow: 0 1px 2px rgba(0, 0, 0, 0.06);
}

.sort svg {
    width: 20px;
    height: 20px;
    stroke-width: 2;
}

.accounts td {
    height: 99px;
    padding: 0 18px;
    border-top: 1px solid #e5e7eb;
    background-color: #fff;
    font-weight: 500;
    white-space: nowrap;
}

.accounts td:first-child {
    padding-left: 24px;
}

.accounts tr:nth-child(even) td {
    background-color: #f9fafb;
}

.accounts td.id {
    color: #2c3e8c;
}

.accounts td a {
    color: #264b80;
}

.view,
.open {
    display: flex;
    align-items: center;
    justify-content: center;
    width: 74px;
    height: 50px;
    border-radius: 9px;
    box-shadow: 0 1px 3px rgba(0, 0, 0, 0.1);
}

.view {
    background-color: #3f68a6;
    color: #fff;
}

.open {
    border: 1px solid #e5e7eb;
    border-radius: 12px;
    background-color: #fff;
    color: #3c4c94;
}

.pager {
    display: flex;
    padding: 18px 37px;
    border-top: 1px solid #e5e7eb;
}

.pager-buttons {
    display: flex;
    width: 391px;
}

.page-button {
    width: 62px;
    height: 56px;
    margin-right: -1px;
    border: 1px solid #e5e7eb;
    background-color: #fff;
}

.page-button:first-child {
    width: 56px;
    border-radius: 9px 0 0 9px;
}

.page-button:disabled {
    opacity: 0.5;
}

.pager .page-last {
    width: 57px;
    margin-right: 13px;
    border-radius: 0 9px 9px 0;
}

.page-size {
    appearance: none;
    width: 143px;
    height: 56px;
    border: 1px solid #d1d5db;
    border-radius: 9px;
    background-color: #fff;
}

/* Floating assistant button */
.widget {
    position: absolute;
    right: 271px;
    bottom: 17px;
    display: flex;
    align-items: center;
    justify-content: center;
    width: 100px;
    height: 100px;
    border: 7px solid transparent;
    border-radius: 24px;
    background: linear-gradient(rgba(45, 50, 70, 0.2), rgba(45, 50, 70, 0.2)) padding-box, rgba(70, 72, 85, 0.19) border-box;
}

.widget svg {
    width: 42px;
    height: 56px;
    stroke: none;
}
```
